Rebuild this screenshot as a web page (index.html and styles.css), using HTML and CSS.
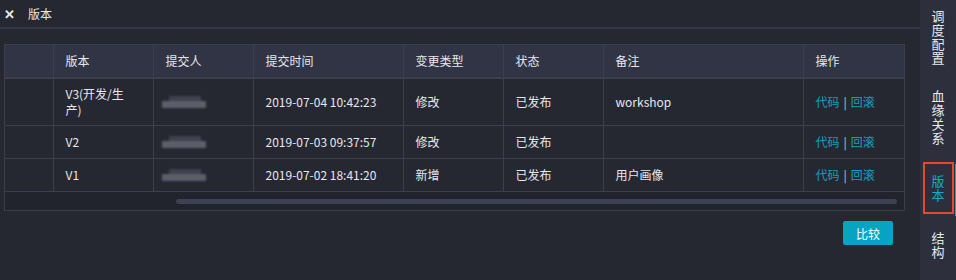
FILE: index.html
```html
<!DOCTYPE html>
<html lang="zh">
<head>
    <meta charset="UTF-8">
    <title>版本</title>
    <link rel="stylesheet" href="styles.css">
</head>
<body>
    <div class="page">
        <div class="main">
            <div class="titlebar">
                <span class="close">✕</span>
                <span class="title">版本</span>
            </div>
            <div class="table-box">
                <table class="versions">
                    <colgroup>
                        <col class="c-sel">
                        <col class="c-100">
                        <col class="c-100">
                        <col class="c-150">
                        <col class="c-100">
                        <col class="c-100">
                        <col class="c-200">
                        <col>
                    </colgroup>
                    <thead>
                        <tr>
                            <th></th>
                            <th>版本</th>
                            <th>提交人</th>
                            <th>提交时间</th>
                            <th>变更类型</th>
                            <th>状态</th>
                            <th>备注</th>
                            <th>操作</th>
                        </tr>
                    </thead>
                    <tbody>
                        <tr class="tall">
                            <td></td>
                            <td>V3(开发/生<br>产)</td>
                            <td><span class="blur"><i></i><b></b></span></td>
                            <td>2019-07-04 10:42:23</td>
                            <td>修改</td>
                            <td>已发布</td>
                            <td>workshop</td>
                            <td><a class="link">代码</a><span class="sep">|</span><a class="link">回滚</a></td>
                        </tr>
                        <tr>
                            <td></td>
                            <td>V2</td>
                            <td><span class="blur"><i></i><b></b></span></td>
                            <td>2019-07-03 09:37:57</td>
                            <td>修改</td>
                            <td>已发布</td>
                            <td></td>
                            <td><a class="link">代码</a><span class="sep">|</span><a class="link">回滚</a></td>
                        </tr>
                        <tr>
                            <td></td>
                            <td>V1</td>
                            <td><span class="blur"><i></i><b></b></span></td>
                            <td>2019-07-02 18:41:20</td>
                            <td>新增</td>
                            <td>已发布</td>
                            <td>用户画像</td>
                            <td><a class="link">代码</a><span class="sep">|</span><a class="link">回滚</a></td>
                        </tr>
                    </tbody>
                </table>
                <div class="scroll">
                    <div class="thumb"></div>
                </div>
            </div>
            <div class="actions">
                <button class="btn">比较</button>
            </div>
        </div>
        <div class="sidebar">
            <div class="side-item">调度配置</div>
            <div class="side-item">血缘关系</div>
            <div class="side-item active">版本</div>
            <div class="side-item">结构</div>
        </div>
    </div>
</body>
</html>
```

FILE: styles.css
```css
body {
    margin: 0;
    background: #252731;
    font-family: "Noto Sans CJK SC", "Liberation Sans", sans-serif;
    font-size: 12px;
    color: #e6e8ee;
}

.page {
    display: flex;
    height: 280px;
    overflow: hidden;
}

.main {
    flex: 1;
    min-width: 0;
}

.titlebar {
    height: 29px;
    display: flex;
    align-items: center;
    border-bottom: 2px solid #343745;
    box-sizing: border-box;
    padding-left: 4px;
}

.close {
    font-size: 13px;
    font-weight: bold;
    color: #e8eaf0;
    width: 24px;
}

.title {
    color: #e6e8ee;
}

.table-box {
    margin: 15px 0 0 4px;
    width: 901px;
    border: 1px solid #3b3e4c;
    box-sizing: border-box;
    background: #22242d;
}

.versions {
    border-collapse: collapse;
    table-layout: fixed;
    width: 100%;
}

.c-sel { width: 48px; }
.c-100 { width: 100px; }
.c-150 { width: 150px; }
.c-200 { width: 200px; }

.versions th,
.versions td {
    border: 1px solid #3b3e4c;
    text-align: left;
    padding: 0 12px;
    line-height: 16px;
    font-weight: normal;
    white-space: nowrap;
}

.versions tr > :first-child {
    border-left: none;
}

.versions tr > :last-child {
    border-right: none;
}

.versions thead th {
    background: #313444;
    height: 32px;
    border-top: none;
    border-bottom: 2px solid #3b3e4c;
    color: #e6e8ee;
}

.versions tbody td {
    height: 32px;
    background: #252731;
}

.versions tbody tr.tall td {
    height: 46px;
}

.blur {
    display: inline-block;
    position: relative;
    width: 44px;
    height: 14px;
    vertical-align: middle;
    margin-left: -4px;
    filter: blur(1px);
}

.blur i {
    position: absolute;
    left: 7px;
    top: 0;
    width: 32px;
    height: 5px;
    background: #3f424e;
}

.blur b {
    position: absolute;
    left: 0;
    top: 5px;
    width: 44px;
    height: 7px;
    background: #5c5f6a;
}

.link {
    color: #13a0c0;
}

.sep {
    color: #c9ccd4;
    margin: 0 4px;
}

.scroll {
    height: 18px;
    display: flex;
    align-items: center;
}

.thumb {
    margin-left: 171px;
    width: 721px;
    height: 5px;
    border-radius: 3px;
    background: #3e4152;
}

.actions {
    display: flex;
    justify-content: flex-end;
    width: 893px;
    margin-top: 10px;
}

.btn {
    width: 50px;
    height: 24px;
    border: none;
    border-radius: 2px;
    background: #06a3c2;
    color: #fff;
    font-family: inherit;
    font-size: 12px;
    padding: 0;
}

.sidebar {
    width: 36px;
    flex: none;
    background: #2d303c;
    display: flex;
    flex-direction: column;
    align-items: center;
    padding-top: 9px;
}

.side-item {
    width: 13px;
    font-size: 13px;
    line-height: 14px;
    color: #e6e8ee;
    margin-bottom: 24px;
    text-align: center;
    word-break: break-all;
}

.side-item.active {
    color: #13a8c6;
    outline: 2px solid #e5492f;
    outline-offset: 0;
    padding: 10px 7px;
    margin: -5px 0 19px;
    position: relative;
}

.side-item.active::after {
    content: "";
    position: absolute;
    right: -5px;
    top: 0;
    width: 2px;
    height: 52px;
    background: #13a8c6;
}
```
